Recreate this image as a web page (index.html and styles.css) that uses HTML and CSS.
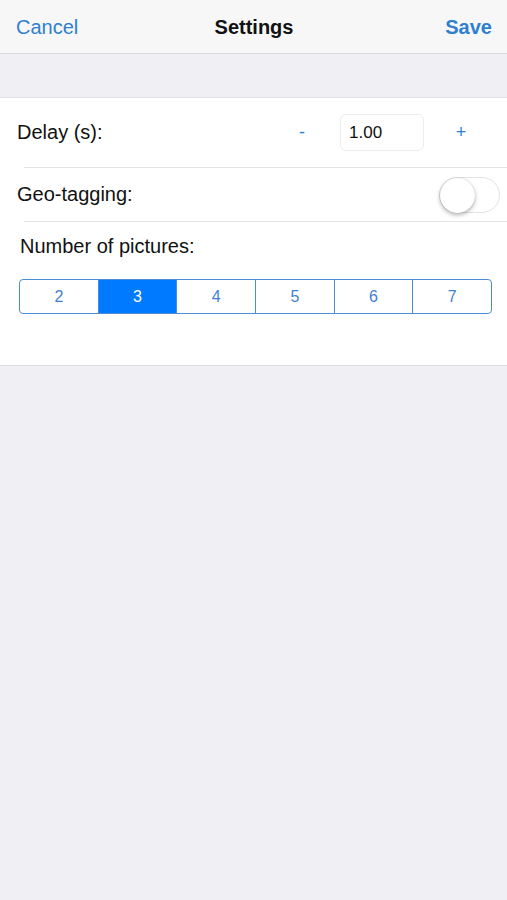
FILE: index.html
```html
<!DOCTYPE html>
<html lang="en">
<head>
    <meta charset="UTF-8">
    <meta name="viewport" content="width=device-width, initial-scale=1.0">
    <title>Settings</title>
    <link rel="stylesheet" href="styles.css">
</head>
<body>
    <header class="navbar">
        <span class="nav-btn">Cancel</span>
        <span class="nav-title">Settings</span>
        <span class="nav-btn save">Save</span>
    </header>

    <section class="card">
        <div class="row delay-row">
            <span class="label">Delay (s):</span>
            <span class="step minus">-</span>
            <div class="num-box">1.00</div>
            <span class="step plus">+</span>
        </div>
        <div class="sep"></div>
        <div class="row geo-row">
            <span class="label">Geo-tagging:</span>
            <div class="toggle"><div class="knob"></div></div>
        </div>
        <div class="sep"></div>
        <div class="pictures">
            <p class="label">Number of pictures:</p>
            <ul class="segments">
                <li>2</li>
                <li class="active">3</li>
                <li>4</li>
                <li>5</li>
                <li>6</li>
                <li>7</li>
            </ul>
        </div>
    </section>
</body>
</html>
```

FILE: styles.css
```css
body {
    margin: 0;
    background-color: #efeff4;
    font-family: "Liberation Sans", Arial, sans-serif;
    color: #111;
}

.navbar {
    height: 51px;
    display: grid;
    grid-template-columns: 1fr auto 1fr;
    align-items: center;
    padding: 2px 15px 0 16px;
    background-color: #f7f7f8;
    border-bottom: 1px solid #d9d9dc;
}

.nav-btn {
    font-size: 20px;
    color: #2f7fd0;
}

.nav-btn.save {
    font-weight: bold;
    justify-self: end;
}

.nav-title {
    font-size: 20px;
    font-weight: bold;
}

.card {
    margin-top: 43px;
    background-color: #fff;
    border-top: 1px solid #e4e4e8;
    border-bottom: 1px solid #dcdce0;
}

.row {
    display: flex;
    align-items: center;
    padding-left: 17px;
}

.label {
    font-size: 20px;
    flex: 1;
}

.delay-row {
    height: 69px;
    padding-right: 26px;
}

.step {
    width: 40px;
    text-align: center;
    font-size: 18px;
    color: #2f7fd0;
}

.minus {
    margin-right: 18px;
}

.plus {
    margin-left: 17px;
}

.num-box {
    width: 74px;
    height: 35px;
    line-height: 35px;
    padding-left: 8px;
    border: 1px solid #ececef;
    border-radius: 6px;
    font-size: 17px;
}

.sep {
    height: 1px;
    margin-left: 24px;
    background-color: #e3e3e6;
}

.geo-row {
    height: 53px;
    padding-right: 7px;
}

.toggle {
    width: 59px;
    height: 34px;
    border: 1px solid #e3e3e6;
    border-radius: 18px;
    background-color: #fff;
}

.knob {
    width: 35px;
    height: 35px;
    border-radius: 50%;
    background-color: #fff;
    box-shadow: 0 2px 4px rgba(0, 0, 0, 0.3), 0 0 1px rgba(0, 0, 0, 0.2);
}

.pictures {
    padding: 12px 15px 51px 19px;
}

.pictures .label {
    margin: 0 0 21px 1px;
    line-height: 24px;
}

.segments {
    display: flex;
    margin: 0;
    padding: 0;
    list-style: none;
    border: 1px solid #4a8ed6;
    border-radius: 4px;
    overflow: hidden;
}

.segments li {
    flex: 1;
    height: 33px;
    line-height: 33px;
    text-align: center;
    font-size: 16px;
    color: #3f82cc;
    border-left: 1px solid #4a8ed6;
}

.segments li:first-child {
    border-left: none;
}

.segments li.active {
    background-color: #007aff;
    color: #fff;
}
```
